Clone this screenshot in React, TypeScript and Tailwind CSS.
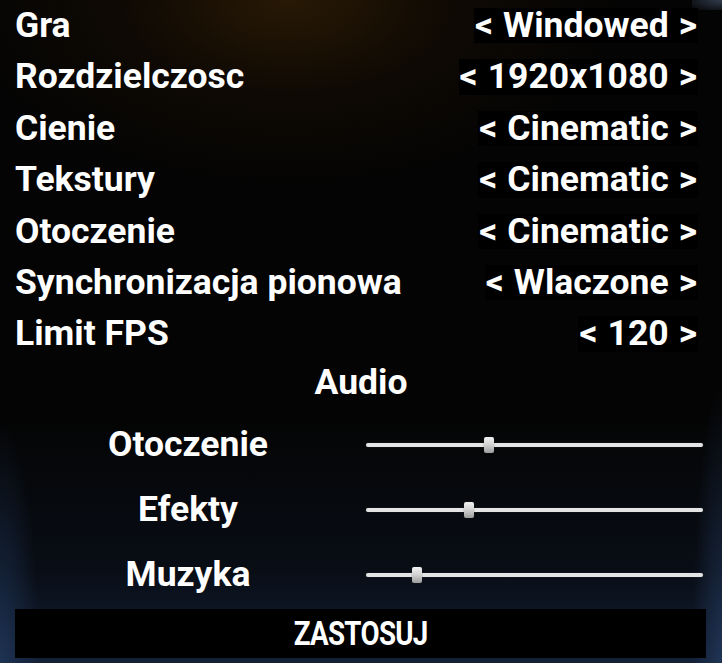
const video = [
  { label: 'Gra', value: 'Windowed' },
  { label: 'Rozdzielczosc', value: '1920x1080' },
  { label: 'Cienie', value: 'Cinematic' },
  { label: 'Tekstury', value: 'Cinematic' },
  { label: 'Otoczenie', value: 'Cinematic' },
  { label: 'Synchronizacja pionowa', value: 'Wlaczone' },
  { label: 'Limit FPS', value: '120' },
]

const audio = [
  { label: 'Otoczenie', level: 0.365 },
  { label: 'Efekty', level: 0.306 },
  { label: 'Muzyka', level: 0.151 },
]

function Slider({ level }: { level: number }) {
  return (
    <div className="relative h-[16px] w-[337px]">
      <div className="absolute left-0 right-0 top-[6px] h-[4px] rounded-full bg-[#e4e4e4] shadow-[0_0_1px_#555]" />
      <div
        className="absolute top-0 h-[16px] w-[10px] -translate-x-1/2 rounded-[2px] bg-gradient-to-b from-[#f2f2f2] via-[#d0d0d0] to-[#9c9c9c] shadow-[0_0_1px_#333]"
        style={{ left: `${level * 100}%` }}
      />
    </div>
  )
}

export default function App() {
  return (
    <div className="relative h-[663px] w-[722px] overflow-hidden bg-[#040404] font-['Roboto',sans-serif] font-bold text-white">
      <div className="pointer-events-none absolute inset-0 bg-[radial-gradient(ellipse_340px_190px_at_40%_0%,rgba(44,27,5,0.9),rgba(24,14,3,0.5)_50%,transparent_100%)]" />
      <div className="pointer-events-none absolute inset-0 bg-[linear-gradient(to_top,rgba(24,40,68,0.8)_0%,rgba(14,24,42,0.45)_14%,transparent_38%)]" />
      <div className="pointer-events-none absolute inset-0 bg-[radial-gradient(ellipse_40px_240px_at_0%_100%,rgba(36,62,102,0.6),transparent)]" />
      <div className="pointer-events-none absolute inset-0 bg-[radial-gradient(ellipse_30px_280px_at_100%_100%,rgba(44,72,115,0.5),transparent)]" />
      <div className="pointer-events-none absolute right-0 top-0 h-[10px] w-[30px] bg-[radial-gradient(ellipse_at_100%_0%,rgba(70,85,110,0.7),transparent)]" />

      <div className="relative flex flex-col px-[15px]">
        <div className="flex flex-col">
          {video.map((row) => (
            <div key={row.label} className="flex h-[51.4px] items-center justify-between pr-[9px] text-[35.5px] leading-none">
              <span>{row.label}</span>
              <span className="flex items-center">
                <span className="bg-black px-[1px]">&lt;</span>
                <span className="bg-black px-[9px]">{row.value}</span>
                <span className="bg-black px-[1px]">&gt;</span>
              </span>
            </div>
          ))}
        </div>

        <div className="flex h-[46px] items-center justify-center text-[35.5px] leading-none">Audio</div>

        <div className="flex flex-col pt-[7px]">
          {audio.map((row) => (
            <div key={row.label} className="flex h-[65px] items-center">
              <span className="w-[346px] text-center text-[35.5px] leading-none">{row.label}</span>
              <div className="ml-[5px]">
                <Slider level={row.level} />
              </div>
            </div>
          ))}
        </div>

        <button className="mt-[1px] flex h-[49px] w-[691px] items-center justify-center bg-black">
          <span className="scale-x-[0.84] text-[33px] font-bold uppercase leading-none tracking-tight">ZASTOSUJ</span>
        </button>
      </div>
    </div>
  )
}
